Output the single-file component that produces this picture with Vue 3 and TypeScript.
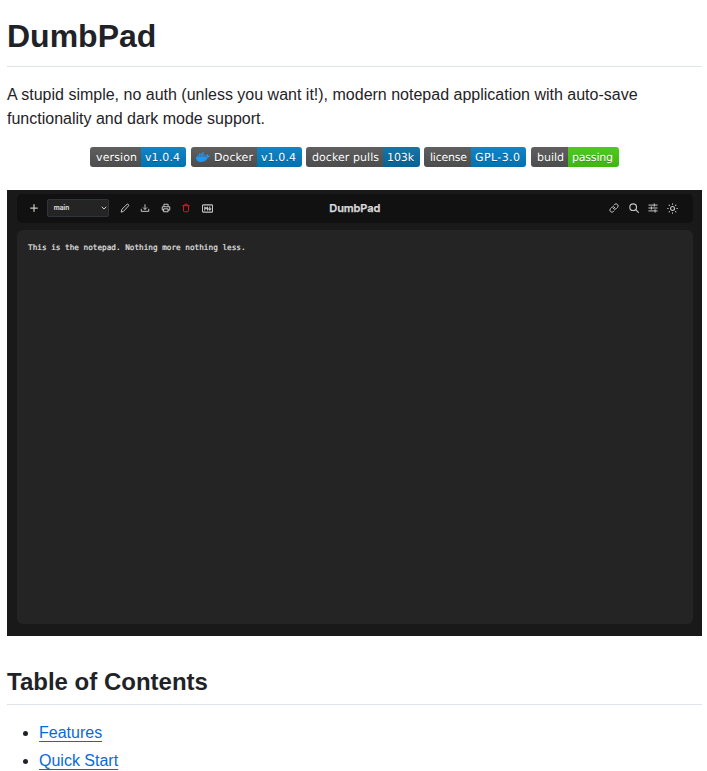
<script setup lang="ts">
interface Badge {
  label: string
  value: string
  left: number
  right: number
  color: string
  logo?: boolean
}

const badges: Badge[] = [
  { label: 'version', value: 'v1.0.4', left: 51, right: 45, color: '#007ec6' },
  { label: 'Docker', value: 'v1.0.4', left: 66, right: 45, color: '#007ec6', logo: true },
  { label: 'docker pulls', value: '103k', left: 77, right: 37, color: '#066da5' },
  { label: 'license', value: 'GPL-3.0', left: 47, right: 55, color: '#007ec6' },
  { label: 'build', value: 'passing', left: 37, right: 51, color: '#44cc11' },
]

const contents: string[] = ['Features', 'Quick Start']

const labelX = (b: Badge): number => (b.logo ? 23 : 6)
const labelLength = (b: Badge): number => b.left - labelX(b) - 4
</script>

<template>
  <main class="readme">
    <h1>DumbPad</h1>
    <p class="intro">
      A stupid simple, no auth (unless you want it!), modern notepad application with auto-save
      functionality and dark mode support.
    </p>

    <div class="badges">
      <svg
        v-for="(b, i) in badges"
        :key="i"
        class="badge"
        :width="b.left + b.right"
        height="20"
        role="img"
      >
        <defs>
          <linearGradient :id="`shine${i}`" x2="0" y2="100%">
            <stop offset="0" stop-color="#bbb" stop-opacity=".1" />
            <stop offset="1" stop-opacity=".1" />
          </linearGradient>
          <clipPath :id="`round${i}`">
            <rect :width="b.left + b.right" height="20" rx="3" />
          </clipPath>
        </defs>
        <g :clip-path="`url(#round${i})`">
          <rect :width="b.left" height="20" fill="#555" />
          <rect :x="b.left" :width="b.right" height="20" :fill="b.color" />
          <rect :width="b.left + b.right" height="20" :fill="`url(#shine${i})`" />
        </g>
        <g v-if="b.logo" transform="translate(5 3) scale(.58333)" fill="#2496ed">
          <path d="M13.98 11.08h2.12a.19.19 0 0 0 .19-.19V9.01a.19.19 0 0 0-.19-.19h-2.12a.19.19 0 0 0-.18.19v1.88c0 .1.08.19.18.19m-2.95-5.43h2.12a.19.19 0 0 0 .18-.19V3.57a.19.19 0 0 0-.18-.18h-2.12a.19.19 0 0 0-.18.18v1.89c0 .1.08.19.18.19m0 2.71h2.12a.19.19 0 0 0 .18-.18V6.29a.19.19 0 0 0-.18-.18h-2.12a.19.19 0 0 0-.18.18v1.89c0 .1.08.18.18.18m-2.93 0h2.12a.19.19 0 0 0 .19-.18V6.29a.19.19 0 0 0-.19-.18H8.1a.19.19 0 0 0-.18.18v1.89c0 .1.08.18.18.18m-2.96 0h2.11a.19.19 0 0 0 .19-.18V6.29a.19.19 0 0 0-.19-.18H5.14a.19.19 0 0 0-.19.18v1.89c0 .1.08.18.19.18m5.89 2.72h2.12a.19.19 0 0 0 .18-.19V9.01a.19.19 0 0 0-.18-.19h-2.12a.19.19 0 0 0-.18.19v1.88c0 .1.08.19.18.19m-2.93 0h2.12a.19.19 0 0 0 .18-.19V9.01a.19.19 0 0 0-.18-.19H8.1a.19.19 0 0 0-.18.19v1.88c0 .1.08.19.18.19m-2.96 0h2.11a.19.19 0 0 0 .19-.19V9.01a.19.19 0 0 0-.18-.19H5.14a.19.19 0 0 0-.19.19v1.88c0 .1.08.19.19.19m-2.92 0h2.12a.19.19 0 0 0 .18-.19V9.01a.19.19 0 0 0-.18-.19H2.22a.19.19 0 0 0-.19.19v1.88c0 .1.08.19.19.19m21.54-1.19c-.06-.05-.67-.51-1.95-.51-.34 0-.68.03-1.01.09-.25-1.7-1.65-2.53-1.72-2.57l-.34-.2-.23.33c-.28.44-.49.92-.61 1.43-.23.97-.09 1.88.4 2.66-.59.33-1.55.41-1.75.42H.75a.75.75 0 0 0-.75.75 11.4 11.4 0 0 0 .69 4.06c.55 1.43 1.36 2.48 2.41 3.12 1.18.72 3.1 1.14 5.27 1.14.98 0 1.96-.09 2.93-.27a12.2 12.2 0 0 0 3.82-1.39 10.5 10.5 0 0 0 2.61-2.14c1.25-1.42 2-3 2.55-4.4h.23c1.37 0 2.21-.55 2.68-1.01.31-.3.55-.66.71-1.06l.1-.28Z" />
        </g>
        <g class="badge-text">
          <text class="shade" :x="labelX(b)" y="15" :textLength="labelLength(b)">{{ b.label }}</text>
          <text :x="labelX(b)" y="14" :textLength="labelLength(b)">{{ b.label }}</text>
          <text class="shade" :x="b.left + 4" y="15" :textLength="b.right - 10">{{ b.value }}</text>
          <text :x="b.left + 4" y="14" :textLength="b.right - 10">{{ b.value }}</text>
        </g>
      </svg>
    </div>

    <section class="app">
      <header class="toolbar">
        <div class="tools">
          <svg class="icon plus" viewBox="0 0 24 24"><path d="M12 4v16M4 12h16" /></svg>
          <div class="select">
            <span>main</span>
            <svg class="chevron" viewBox="0 0 10 10"><path d="M2.2 3.5 5 6.300l2.800-2.800" /></svg>
          </div>
          <svg class="icon" viewBox="0 0 24 24"><path d="m3 21 1.500-6L17 3q2-1 3.300 .7T20.500 7L9 19.500Z" /></svg>
          <svg class="icon" viewBox="0 0 24 24"><path d="M3 15v5h18v-5M12 4v11M8 11.500l4 4 4-4" /></svg>
          <svg class="icon" viewBox="0 0 24 24"><path d="M7 8V3h10v5M7 17H3V9h18v8h-4M7 14h10v7H7Z" /></svg>
          <svg class="icon trash" viewBox="0 0 24 24"><path d="M4 6.500h16M6 6.500v12.500q0 2 2 2h8q2 0 2-2V6.500M9 6V3h6v3" /></svg>
          <svg class="icon markdown" viewBox="0 0 24 24"><path d="M3 4h18q2 0 2 2v12q0 2-2 2H3q-2 0-2-2V6q0-2 2-2ZM6 15.500V9l3 3.500L12 9v6.500M17 8.500v7M14.500 13l2.500 2.500 2.500-2.500" /></svg>
        </div>
        <strong class="title">DumbPad</strong>
        <div class="actions">
          <svg class="icon" viewBox="0 0 24 24"><path d="M10 13a5 5 0 0 0 7.540.540l3-3a5 5 0 0 0-7.070-7.070l-1.720 1.710M14 11a5 5 0 0 0-7.540-.540l-3 3a5 5 0 0 0 7.070 7.070l1.710-1.710" /></svg>
          <svg class="icon search" viewBox="0 0 24 24"><circle cx="10" cy="10" r="8" /><path d="m16 16 6.500 6.500" /></svg>
          <svg class="icon" viewBox="0 0 24 24"><path d="M2 5h20M2 12h20M2 19h20M15 2v6M8 9v6M17 16v6" /></svg>
          <svg class="icon sun" viewBox="0 0 24 24"><circle cx="12" cy="12" r="4.300" /><path d="M12 1.500v1M12 21.500v1M1.500 12h1M21.500 12h1M4.600 4.600l.7.7M18.700 18.700l.7.7M4.600 19.400l.7-.7M18.700 5.300l.7-.7" /></svg>
        </div>
      </header>
      <div class="editor">This is the notepad. Nothing more nothing less.</div>
    </section>

    <h2>Table of Contents</h2>
    <ul>
      <li v-for="item in contents" :key="item"><a href="#">{{ item }}</a></li>
    </ul>
  </main>
</template>

<style>
body {
  margin: 0;
  background: #fff;
  overflow: hidden;
}
</style>

<style scoped>
.readme {
  box-sizing: border-box;
  height: 771px;
  overflow: hidden;
  padding: 16px 5px 0 7px;
  color: #1f2328;
  font: 16px/24px "Liberation Sans", Arial, sans-serif;
}

h1,
h2 {
  margin: 0;
  border-bottom: 1px solid #d1d9e0b3;
  font-weight: 600;
  line-height: 1.25;
}

h1 {
  padding-bottom: 10px;
  font-size: 32px;
}

h2 {
  margin-top: 31px;
  padding-bottom: 7px;
  font-size: 24px;
}

.intro {
  margin: 16px 0;
}

.badges {
  display: flex;
  justify-content: center;
  gap: 4.45px;
  height: 43px;
}

.badge {
  flex: none;
}

.badge-text {
  fill: #fff;
  font: 11px "DejaVu Sans", sans-serif;
  text-rendering: geometricPrecision;
}

.shade {
  fill: #010101;
  fill-opacity: 0.3;
}

.app {
  box-sizing: border-box;
  display: flex;
  flex-direction: column;
  gap: 7px;
  height: 446px;
  padding: 4px 9px 12px 9.5px;
  background: #191919;
}

.toolbar {
  box-sizing: border-box;
  display: grid;
  grid-template-columns: 1fr auto 1fr;
  align-items: center;
  height: 29px;
  padding-bottom: 1px;
  border-radius: 5px;
  background: #111;
  color: #dadada;
}

.tools,
.actions {
  display: flex;
  align-items: center;
}

.tools {
  gap: 10.3px;
  padding-left: 12.5px;
}

.actions {
  justify-content: flex-end;
  gap: 9.2px;
  padding-right: 15px;
}

.icon {
  flex: none;
  width: 10px;
  height: 10px;
  fill: none;
  stroke: #c4c4c4;
  stroke-width: 2.4;
  stroke-linecap: round;
  stroke-linejoin: round;
}

.trash {
  stroke: #c91f28;
}

.plus {
  stroke-width: 3;
}

.markdown {
  width: 11px;
  height: 11px;
  margin-left: 0.6px;
}

.search {
  stroke-width: 2.8;
}

.sun {
  width: 11px;
  height: 11px;
}

.select {
  box-sizing: border-box;
  display: flex;
  align-items: center;
  justify-content: space-between;
  width: 62px;
  height: 18px;
  margin-left: -2px;
  margin-right: 0.4px;
  padding: 0 0 0 5.5px;
  border: 1px solid #30333a;
  border-radius: 2px;
  background: #242424;
  font: 500 6.7px/16px Inter, sans-serif;
  -webkit-text-stroke: 0.2px #dadada;
}

.chevron {
  width: 8px;
  height: 8px;
  fill: none;
  stroke: #dadada;
  stroke-width: 1.2;
}

.title {
  font: 600 11px/16px Inter, sans-serif;
  letter-spacing: -0.1px;
  -webkit-text-stroke: 0.25px #dadada;
}

.editor {
  flex: 1;
  box-sizing: border-box;
  padding: 12px 11.5px;
  border-radius: 6px;
  background: #242424;
  color: #e2e2e2;
  font: 7.7px/12px "DejaVu Sans Mono", monospace;
  -webkit-text-stroke: 0.2px #e2e2e2;
}

ul {
  margin: 16px 0 0;
  padding-left: 32px;
}

li + li {
  margin-top: 4px;
}

a {
  color: #0969da;
  text-decoration: underline;
  text-underline-offset: 3.2px;
}
</style>
